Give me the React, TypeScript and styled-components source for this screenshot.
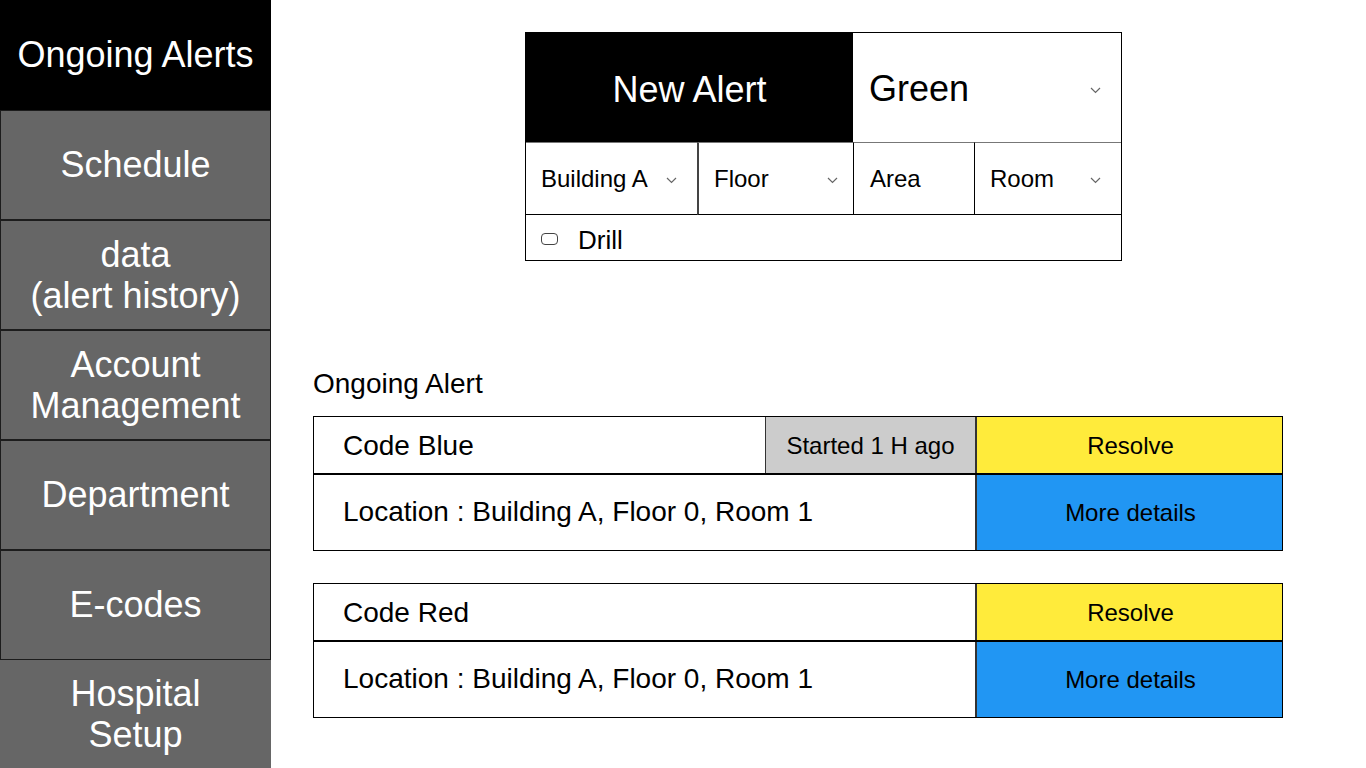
import React from "react";
import styled, { createGlobalStyle } from "styled-components";

const Global = createGlobalStyle`
  html, body { margin: 0; padding: 0; background: #fff; }
  body { font-family: "Liberation Sans", Arial, sans-serif; color: #000; }
  * { box-sizing: border-box; }
`;

const Page = styled.div`
  display: flex;
  width: 1366px;
  height: 768px;
  overflow: hidden;
`;

const Sidebar = styled.nav`
  width: 271px;
  flex: none;
  display: flex;
  flex-direction: column;
`;

const NavItem = styled.div<{ $active?: boolean; $plain?: boolean }>`
  height: ${(p) => (p.$plain ? "108px" : "110px")};
  display: flex;
  align-items: center;
  justify-content: center;
  text-align: center;
  font-size: 36px;
  line-height: 1.15;
  color: #fff;
  background: ${(p) => (p.$active ? "#000" : "#666666")};
  border: ${(p) => (p.$active || p.$plain ? "none" : "1px solid #1c1c1c")};
`;

const Main = styled.main`
  flex: 1;
  display: flex;
  flex-direction: column;
  padding: 32px 0 0 42px;
`;

const Form = styled.div`
  margin-left: 212px;
  width: 597px;
  border: 1px solid #000;
  display: grid;
  grid-template-columns: 171px 156px 121px 147px;
  grid-template-rows: 109px 73px 45px;
`;

const NewAlert = styled.div`
  grid-column: span 2;
  background: #000;
  color: #fff;
  font-size: 36px;
  display: flex;
  align-items: center;
  justify-content: center;
  padding: 4px 0 0 0;
`;

const SelectCell = styled.div<{ $big?: boolean; $sep?: string; $pad?: number; $chev?: number }>`
  grid-column: ${(p) => (p.$big ? "span 2" : "auto")};
  display: flex;
  align-items: center;
  justify-content: space-between;
  font-size: ${(p) => (p.$big ? "36px" : "24px")};
  padding-top: ${(p) => (p.$big ? "4px" : "1px")};
  padding-left: ${(p) => p.$pad ?? 16}px;
  padding-right: ${(p) => p.$chev ?? 20}px;
  border-left: ${(p) => p.$sep ?? "none"};
  border-top: ${(p) => (p.$big ? "none" : "1px solid #777")};
  border-bottom: 1px solid ${(p) => (p.$big ? "#fff" : "#000")};
`;

const DrillRow = styled.div`
  grid-column: 1 / -1;
  display: flex;
  align-items: center;
  gap: 20px;
  padding: 6px 0 0 15px;
  font-size: 26px;
`;

const Checkbox = styled.span`
  width: 17px;
  height: 12px;
  border: 1.5px solid #444;
  border-radius: 4px;
  margin-top: -4px;
`;

const Label = styled.div`
  margin-top: 107px;
  font-size: 28px;
  line-height: 32px;
  height: 32px;
`;

const Cards = styled.div`
  margin-top: 16px;
  display: flex;
  flex-direction: column;
  gap: 32px;
`;

const Card = styled.div`
  width: 970px;
  border: 1px solid #000;
  display: flex;
  flex-direction: column;
`;

const TopRow = styled.div`
  display: flex;
  height: 58px;
  border-bottom: 2px solid #000;
`;

const BottomRow = styled.div`
  display: flex;
  height: 75px;
`;

const Title = styled.div<{ $lift?: boolean }>`
  flex: 1;
  display: flex;
  align-items: center;
  padding: ${(p) => (p.$lift ? "0 0 2px 29px" : "2px 0 0 29px")};
  font-size: 28px;
`;

const Started = styled.div`
  width: 210px;
  background: #cccccc;
  border-left: 1px solid #333;
  display: flex;
  align-items: center;
  justify-content: center;
  font-size: 24px;
  padding-top: 1px;
`;

const Action = styled.div<{ $color: string }>`
  width: 307px;
  background: ${(p) => p.$color};
  border-left: 2px solid #333;
  display: flex;
  align-items: center;
  justify-content: center;
  font-size: 24px;
  padding: 1px 0 0 2px;
`;

const Chevron = () => (
  <svg width="11" height="7" viewBox="0 0 11 7" style={{ marginTop: 2 }}>
    <path d="M1 1 L5.5 5.5 L10 1" fill="none" stroke="#666" strokeWidth="1.2" />
  </svg>
);

const alerts = [
  { title: "Code Blue", started: "Started 1 H ago" },
  { title: "Code Red" },
];

export default function App() {
  return (
    <>
      <Global />
      <Page>
        <Sidebar>
          <NavItem $active>Ongoing Alerts</NavItem>
          <NavItem>Schedule</NavItem>
          <NavItem>
            data
            <br />
            (alert history)
          </NavItem>
          <NavItem>
            Account
            <br />
            Management
          </NavItem>
          <NavItem>Department</NavItem>
          <NavItem>E-codes</NavItem>
          <NavItem $plain>
            Hospital
            <br />
            Setup
          </NavItem>
        </Sidebar>
        <Main>
          <Form>
            <NewAlert>New Alert</NewAlert>
            <SelectCell $big $pad={16} $chev={20}>
              Green
              <Chevron />
            </SelectCell>
            <SelectCell $pad={15} $chev={20}>
              Building A
              <Chevron />
            </SelectCell>
            <SelectCell $sep="2px solid #444" $pad={15} $chev={15}>
              Floor
              <Chevron />
            </SelectCell>
            <SelectCell $sep="1px solid #000" $pad={16}>
              Area
            </SelectCell>
            <SelectCell $sep="1px solid #000" $pad={15} $chev={20}>
              Room
              <Chevron />
            </SelectCell>
            <DrillRow>
              <Checkbox />
              Drill
            </DrillRow>
          </Form>
          <Label>Ongoing Alert</Label>
          <Cards>
            {alerts.map((a) => (
              <Card key={a.title}>
                <TopRow>
                  <Title>{a.title}</Title>
                  {a.started && <Started>{a.started}</Started>}
                  <Action $color="#ffeb3b">Resolve</Action>
                </TopRow>
                <BottomRow>
                  <Title $lift>Location : Building A, Floor 0, Room 1</Title>
                  <Action $color="#2196f3">More details</Action>
                </BottomRow>
              </Card>
            ))}
          </Cards>
        </Main>
      </Page>
    </>
  );
}
